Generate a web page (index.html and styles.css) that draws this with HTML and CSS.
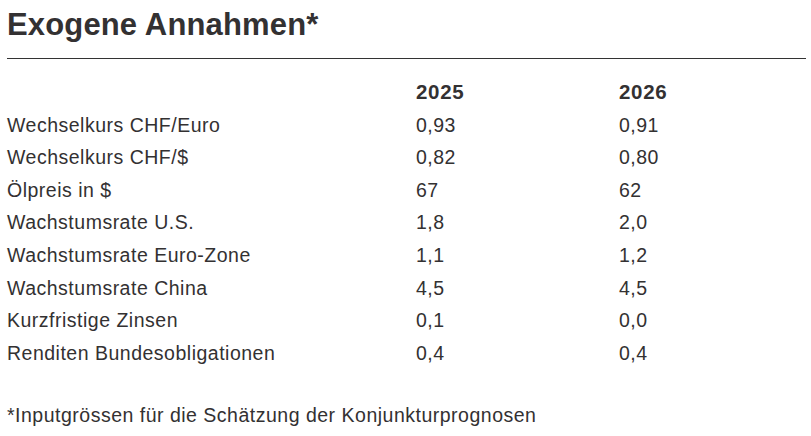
FILE: index.html
```html
<!DOCTYPE html>
<html lang="de">
<head>
<meta charset="utf-8">
<link rel="stylesheet" href="styles.css">
</head>
<body>
<div class="page">
  <h1 class="title">Exogene Annahmen*</h1>
  <hr class="rule">
  <div class="table">
    <div class="row head"><span></span><span>2025</span><span>2026</span></div>
    <div class="row"><span>Wechselkurs CHF/Euro</span><span>0,93</span><span>0,91</span></div>
    <div class="row"><span>Wechselkurs CHF/$</span><span>0,82</span><span>0,80</span></div>
    <div class="row"><span>Ölpreis in $</span><span>67</span><span>62</span></div>
    <div class="row"><span>Wachstumsrate U.S.</span><span>1,8</span><span>2,0</span></div>
    <div class="row"><span>Wachstumsrate Euro-Zone</span><span>1,1</span><span>1,2</span></div>
    <div class="row"><span>Wachstumsrate China</span><span>4,5</span><span>4,5</span></div>
    <div class="row"><span>Kurzfristige Zinsen</span><span>0,1</span><span>0,0</span></div>
    <div class="row"><span>Renditen Bundesobligationen</span><span>0,4</span><span>0,4</span></div>
  </div>
  <p class="note">*Inputgrössen für die Schätzung der Konjunkturprognosen</p>
</div>
</body>
</html>
```
FILE: styles.css
```css
html, body {
  margin: 0;
  padding: 0;
  background: #fff;
}
body {
  font-family: "Liberation Sans", Arial, sans-serif;
  color: #333132;
}
.page {
  padding: 0 5px 0 7px;
}
.title {
  margin: 0;
  padding-top: 5px;
  font-size: 31px;
  line-height: 40px;
  font-weight: bold;
  letter-spacing: 0.15px;
}
.rule {
  margin: 13px 0 0 0;
  border: 0;
  border-top: 1px solid #333;
  height: 0;
}
.table {
  margin-top: 17px;
}
.row {
  display: grid;
  grid-template-columns: 409px 203px 1fr;
  font-size: 19.5px;
  line-height: 32.6px;
  letter-spacing: 0.5px;
}
.row.head {
  font-weight: bold;
  font-size: 20.5px;
  letter-spacing: 0.7px;
}
.note {
  margin: 34px 0 0 0;
  font-size: 19.5px;
  line-height: 24px;
  letter-spacing: 0.5px;
}
```
